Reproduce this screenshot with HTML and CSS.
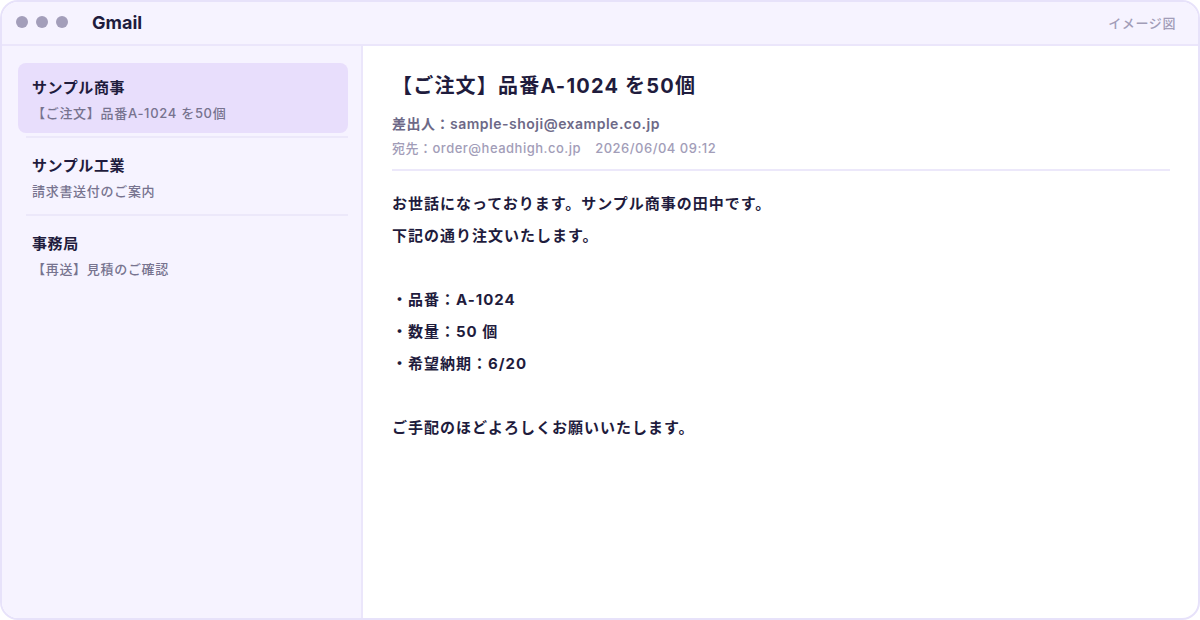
FILE: index.html
```html
<!DOCTYPE html>
<html lang="ja">
<head>
  <meta charset="UTF-8">
  <title>Gmail イメージ図</title>
  <link rel="stylesheet" href="styles.css">
</head>
<body>
  <div class="window">
    <!-- Title bar -->
    <div class="titlebar">
      <div class="dots">
        <span class="dot"></span>
        <span class="dot"></span>
        <span class="dot"></span>
      </div>
      <div class="app-name">Gmail</div>
      <div class="caption">イメージ図</div>
    </div>

    <div class="main">
      <!-- Mail list -->
      <div class="sidebar">
        <div class="mail-item active">
          <div class="mail-from">サンプル商事</div>
          <div class="mail-subject">【ご注文】品番A-1024 を50個</div>
        </div>
        <div class="divider"></div>
        <div class="mail-item">
          <div class="mail-from">サンプル工業</div>
          <div class="mail-subject">請求書送付のご案内</div>
        </div>
        <div class="divider"></div>
        <div class="mail-item">
          <div class="mail-from">事務局</div>
          <div class="mail-subject">【再送】見積のご確認</div>
        </div>
      </div>

      <!-- Reading pane -->
      <div class="reader">
        <h1 class="subject">【ご注文】品番A-1024 を50個</h1>
        <div class="sender">差出人：sample-shoji@example.co.jp</div>
        <div class="meta">宛先：order@headhigh.co.jp<span class="date">2026/06/04 09:12</span></div>
        <div class="body">
          <p>お世話になっております。サンプル商事の田中です。</p>
          <p>下記の通り注文いたします。</p>
          <p class="blank"></p>
          <p>・品番：A-1024</p>
          <p>・数量：50 個</p>
          <p>・希望納期：6/20</p>
          <p class="blank"></p>
          <p>ご手配のほどよろしくお願いいたします。</p>
        </div>
      </div>
    </div>
  </div>
</body>
</html>
```

FILE: styles.css
```css
/* General */
* {
  box-sizing: border-box;
}

body {
  margin: 0;
  font-family: Inter, "Noto Sans CJK JP", sans-serif;
  color: #1f1c3d;
  background: #ffffff;
}

.window {
  width: 1200px;
  height: 620px;
  border: 2px solid #e7e2fa;
  border-radius: 18px;
  overflow: hidden;
  display: flex;
  flex-direction: column;
  background: #ffffff;
}

/* Title bar */
.titlebar {
  height: 44px;
  flex-shrink: 0;
  display: flex;
  align-items: center;
  padding: 0 22px 2px 14px;
  background: #f6f3ff;
  border-bottom: 2px solid #ebe6fb;
}

.dots {
  display: flex;
  gap: 8px;
}

.dot {
  width: 12px;
  height: 12px;
  border-radius: 50%;
  background: #a39eba;
}

.app-name {
  margin-left: 24px;
  font-size: 18px;
  font-weight: 700;
  color: #1f1c3d;
}

.caption {
  margin-left: auto;
  font-size: 13px;
  font-weight: 500;
  letter-spacing: 0.6px;
  color: #a29db8;
}

.main {
  flex: 1;
  display: flex;
  min-height: 0;
}

/* Sidebar */
.sidebar {
  width: 361px;
  flex-shrink: 0;
  padding: 17px 13px 17px 16px;
  background: #f6f3ff;
  border-right: 2px solid #ebe6fb;
}

.mail-item {
  height: 70px;
  padding: 14px 14px 10px;
  border-radius: 8px;
}

.mail-item.active {
  background: #e8defc;
}

.mail-from {
  font-size: 15px;
  line-height: 22px;
  font-weight: 700;
  letter-spacing: 0.6px;
  color: #1f1c3d;
  margin-bottom: 4px;
}

.mail-subject {
  font-size: 13px;
  line-height: 20px;
  font-weight: 500;
  letter-spacing: 0.7px;
  color: #77738f;
}

.divider {
  height: 2px;
  margin: 3px 0 3px 8px;
  background: #ece8fa;
}

/* Reader */
.reader {
  flex: 1;
  padding: 26px 28px 0 29px;
}

.subject {
  margin: 0 0 13px;
  font-size: 20px;
  line-height: 28px;
  font-weight: 700;
  letter-spacing: 1.2px;
  color: #1f1c3d;
}

.sender {
  font-size: 14px;
  line-height: 22px;
  font-weight: 600;
  letter-spacing: 0.5px;
  color: #6d6987;
  margin-bottom: 3px;
}

.meta {
  font-size: 13px;
  line-height: 20px;
  font-weight: 500;
  letter-spacing: 0.5px;
  color: #a29db8;
  padding-bottom: 11px;
  border-bottom: 2px solid #ece8fa;
}

.date {
  margin-left: 14px;
}

.body {
  padding-top: 17px;
}

.body p {
  margin: 0;
  height: 32px;
  font-size: 15px;
  line-height: 32px;
  font-weight: 700;
  letter-spacing: 1px;
  color: #1f1c3d;
}
```
